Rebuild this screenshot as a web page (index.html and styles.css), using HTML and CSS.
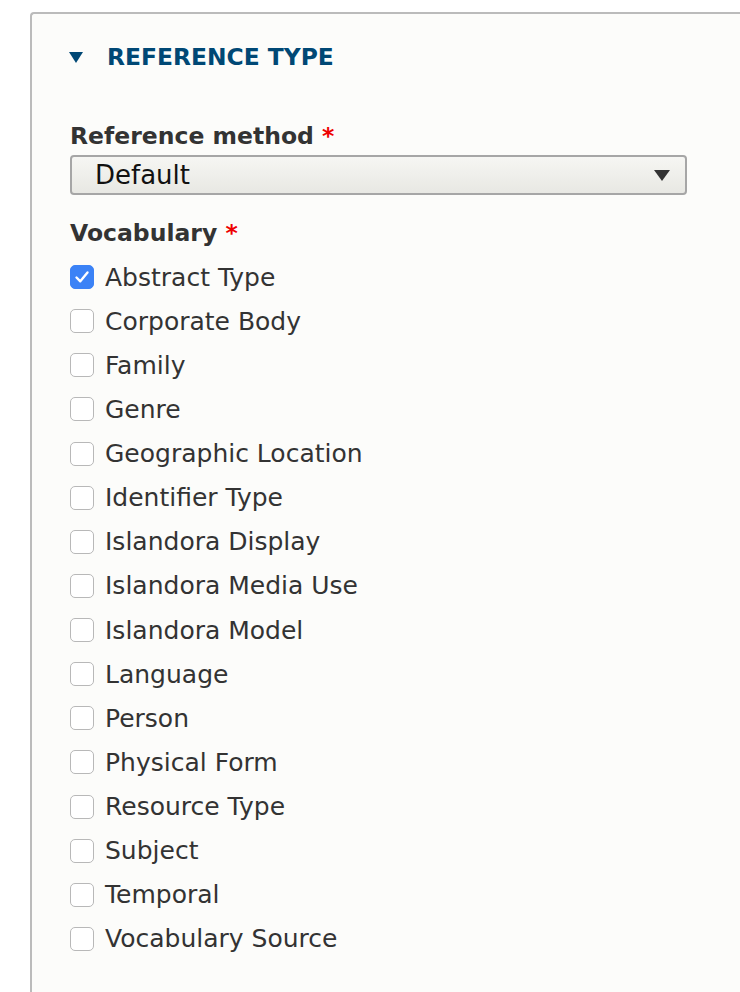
FILE: index.html
```html
<!DOCTYPE html>
<html>
<head>
<meta charset="utf-8">
<link rel="stylesheet" href="styles.css">
</head>
<body>
<div class="details">
  <div class="summary">
    <span class="tri"></span>
    <span class="summary-title">REFERENCE TYPE</span>
  </div>
  <div class="wrapper">
    <div class="field">
      <div class="label">Reference method <span class="req">*</span></div>
      <div class="select"><span>Default</span><span class="arrow"></span></div>
    </div>
    <div class="field">
      <div class="label">Vocabulary <span class="req">*</span></div>
      <div class="checks">
        <div class="check"><span class="box on"><svg viewBox="0 0 24 24" width="24" height="24"><path d="M6.5 12.5 L10.3 16.3 L17.5 7.5" fill="none" stroke="#fff" stroke-width="2.4" stroke-linecap="round" stroke-linejoin="round"/></svg></span><span>Abstract Type</span></div>
        <div class="check"><span class="box"></span><span>Corporate Body</span></div>
        <div class="check"><span class="box"></span><span>Family</span></div>
        <div class="check"><span class="box"></span><span>Genre</span></div>
        <div class="check"><span class="box"></span><span>Geographic Location</span></div>
        <div class="check"><span class="box"></span><span>Identifier Type</span></div>
        <div class="check"><span class="box"></span><span>Islandora Display</span></div>
        <div class="check"><span class="box"></span><span>Islandora Media Use</span></div>
        <div class="check"><span class="box"></span><span>Islandora Model</span></div>
        <div class="check"><span class="box"></span><span>Language</span></div>
        <div class="check"><span class="box"></span><span>Person</span></div>
        <div class="check"><span class="box"></span><span>Physical Form</span></div>
        <div class="check"><span class="box"></span><span>Resource Type</span></div>
        <div class="check"><span class="box"></span><span>Subject</span></div>
        <div class="check"><span class="box"></span><span>Temporal</span></div>
        <div class="check"><span class="box"></span><span>Vocabulary Source</span></div>
      </div>
    </div>
  </div>
</div>
</body>
</html>
```

FILE: styles.css
```css
html, body {
  margin: 0;
  padding: 0;
  background: #fff;
  overflow: hidden;
  height: 992px;
}
body {
  font-family: "DejaVu Sans", "Lucida Grande", sans-serif;
  color: #333;
}
.details {
  margin: 12px 0 0 30px;
  border: 2px solid #bbb;
  border-right: none;
  border-bottom: none;
  border-top-left-radius: 4px;
  background: #fcfcfa;
  height: 1000px;
}
.summary {
  display: flex;
  align-items: center;
  height: 86px;
  padding-left: 37px;
}
.tri {
  width: 0;
  height: 0;
  border-left: 7px solid transparent;
  border-right: 7px solid transparent;
  border-top: 11px solid #004875;
  margin-right: 24px;
}
.summary-title {
  font-weight: bold;
  font-size: 23.4px;
  color: #004875;
}
.wrapper {
  padding: 21px 0 0 38px;
}
.label {
  font-weight: bold;
  font-size: 23.5px;
  line-height: 30px;
  color: #333;
}
.req {
  color: #e00;
}
.select {
  margin-top: 4px;
  height: 36px;
  border: 2px solid #a6a6a6;
  border-radius: 4px;
  background: linear-gradient(#f6f6f3, #e8e8e3);
  display: flex;
  align-items: center;
  justify-content: space-between;
  padding: 0 15px 0 23px;
  box-sizing: content-box;
  font-size: 26px;
  color: #111;
  width: 575px;
}
.arrow {
  width: 0;
  height: 0;
  border-left: 8px solid transparent;
  border-right: 8px solid transparent;
  border-top: 11px solid #333;
}
.field + .field {
  margin-top: 23px;
}
.checks {
  margin-top: 7px;
}
.check {
  display: flex;
  align-items: center;
  height: 44.133px;
  font-size: 25px;
}
.box {
  width: 22px;
  height: 22px;
  border: 1px solid #b8b8b8;
  border-radius: 5px;
  background: #fff;
  margin-right: 11px;
  flex: none;
  position: relative;
  overflow: hidden;
}
.box.on {
  background: #3b82f6;
  border-color: #3b82f6;
}
.box svg {
  position: absolute;
  left: -1px;
  top: -1px;
}
```
